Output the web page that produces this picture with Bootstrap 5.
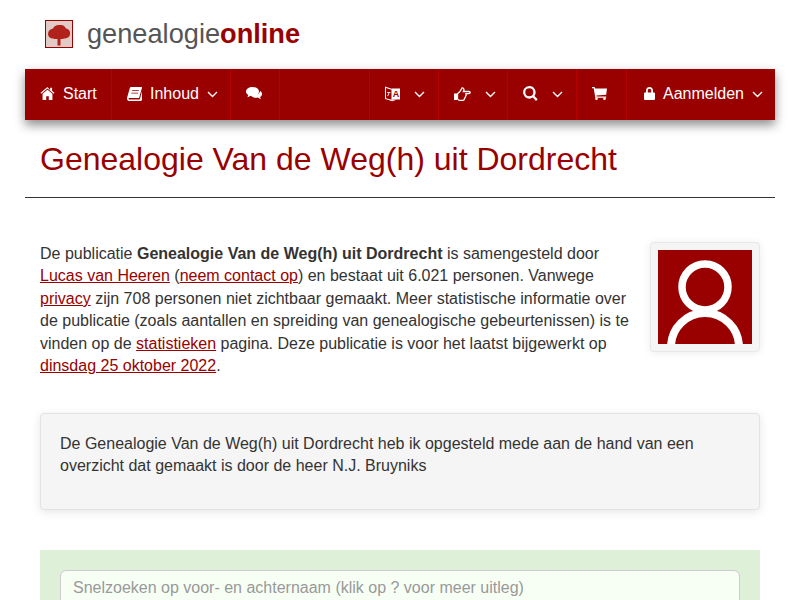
<!DOCTYPE html>
<html lang="nl">
<head>
  <meta charset="UTF-8">
  <meta name="viewport" content="width=device-width, initial-scale=1.0">
  <title>Genealogie Van de Weg(h) uit Dordrecht</title>
  <link href="https://cdn.jsdelivr.net/npm/bootstrap@5.3.2/dist/css/bootstrap.min.css" rel="stylesheet">
  <script defer src="https://cdn.jsdelivr.net/npm/bootstrap@5.3.2/dist/js/bootstrap.bundle.min.js"></script>
  <style>
    body { font-family: "Liberation Sans", Arial, sans-serif; font-size: 16px; line-height: 22.4px; color: #333; background: #fff; }
    a { color: #990000; }
    .site-wrap { width: 750px; margin: 0 auto; }
    .site-brand { height: 69px; padding: 0 0 2px 20px; gap: 14px; }
    .site-logo { width: 28px; height: 28px; display: block; }
    .site-name { font-size: 27.2px; line-height: 30px; color: #555; }
    .site-name b { color: #990000; }
    .main-bar { height: 51px; background: #990000; padding: 0; box-shadow: 0 5px 10px rgba(0,0,0,.45); }
    .main-bar .navbar-nav { flex-direction: row; width: 100%; height: 100%; }
    .main-bar .nav-link { display: flex; align-items: center; height: 51px; color: #fff; padding: 0 0 0 15px; border-left: 1px solid #b30000; gap: 8px; }
    .main-bar .nav-item:first-child .nav-link { border-left: 0; }
    .main-bar svg { fill: #fff; display: block; flex: none; margin-top: -2px; }
    .main-bar .chev { fill: none; stroke: #fff; stroke-width: 1.4; margin-top: 0; }
    .main-bar .chev-gap { margin-left: 6px; }
    .w-start { width: 86px; } .w-inhoud { width: 119px; } .w-chat { width: 49px; } .w-gap { width: 90px; }
    .w-lang { width: 69px; } .w-hand { width: 69px; } .w-search { width: 69px; } .w-cart { width: 50px; } .w-login { width: 149px; }
    .w-login .nav-link { padding-left: 17px; }
    .page-title { margin: 0; padding: 21px 15px 18px; font-size: 32px; line-height: 37px; font-weight: 400; color: #990000; border-bottom: 1px solid #333; height: 78px; }
    .intro-block { padding: 45px 15px 0; min-height: 215px; }
    .photo-box { width: 110px; height: 110px; padding: 7px; margin: -1px 0 0 20px; background: #f5f5f5; border: 1px solid #e8e8e8; border-radius: 4px; box-shadow: 0 1px 8px rgba(0,0,0,.08); }
    .photo-box svg { display: block; }
    .note-box { margin: 0 15px; height: 97px; padding: 19px; background: #f5f5f5; border: 1px solid #e3e3e3; border-radius: 4px; box-shadow: 0 2px 10px rgba(0,0,0,.1); }
    .search-box { margin: 40px 15px 0; padding: 20px; background: #dff0d8; height: 120px; }
    .search-box .form-control { height: 40px; font-size: 16px; line-height: 22.4px; padding: 3px 12px 7px; background: #f7fff5; border: 1px solid #ccc; color: #333; }
    .search-box .form-control::placeholder { color: #999; opacity: 1; }
  </style>
</head>
<body>
  <div class="site-wrap">
    <div class="site-brand d-flex align-items-center">
      <svg class="site-logo" viewBox="0 0 28 28">
        <defs><filter id="zacht"><feGaussianBlur stdDeviation="0.6"/></filter></defs>
        <rect x=".5" y=".5" width="27" height="27" fill="#e2cbc6" stroke="#990000"/>
        <g filter="url(#zacht)" fill="#b1221a">
          <path d="M12.500 18h3v7.500h-3z"/>
          <path d="M3 14c0-3 2-5 5-5.500C9 6 12 4.500 15 5c3-.5 5 1.500 6 3.500 3 .5 4.500 3 4 5.500 0 3-3 4.500-6 4.500-2 1-4 .5-5 0-2 .5-4 1-6 0-3 0-5-2-5-4.500z"/>
        </g>
      </svg>
      <div class="site-name">genealogie<b>online</b></div>
    </div>

    <nav class="navbar main-bar">
      <ul class="navbar-nav">
        <li class="nav-item w-start"><a class="nav-link" href="#">
          <svg width="15" height="13" viewBox="0 0 15 14"><path d="M7.500 0 0 6.300l.8 1L7.500 1.700l6.700 5.600.8-1-2.600-2.200V.8h-2v2.600zM7.500 3 2.200 7.400V14h3.900v-4h2.800v4h3.900V7.400z"/></svg>
          Start</a></li>
        <li class="nav-item w-inhoud"><a class="nav-link" href="#">
          <svg width="15" height="14" viewBox="0 0 15 14"><path d="M4 0h10.500c.5 0 .6.4.5.8l-2.700 9.400c-.2.6-.5.9-1.200.9H2.500c-.8 0-1 .5-.9.8.1.4.5.6 1 .6h9.700c.3 0 .5-.2.600-.4L15.300 3l-.1 9.500c-.2.900-.8 1.500-1.700 1.500H2.400C1 14-.3 12.700 0 11l2.700-9.500C3 .6 3.400 0 4 0zm1.200 3.200-.2.900h6.700l.3-.9zm-.8 2.500-.2.900h6.700l.3-.9z"/></svg>
          Inhoud
          <svg class="chev" width="11" height="7" viewBox="0 0 11 7"><path d="m1 1 4.500 4.500L10 1"/></svg></a></li>
        <li class="nav-item w-chat"><a class="nav-link" href="#">
          <svg width="16" height="13" viewBox="0 0 16 13"><path d="M6.500 0C10 0 13 2 13 4.500S10 9 6.500 9c-.7 0-1.300-.1-2-.2C3.500 9.500 2.500 10 1.200 10.200c.5-.7.900-1.400 1-2.200C.9 7.200 0 5.900 0 4.500 0 2 3 0 6.500 0zm7.700 4c1.100.7 1.800 1.700 1.800 2.900 0 1.200-.7 2.300-1.900 3 .1.800.5 1.500 1 2.100-1.200-.2-2.300-.7-3.200-1.400-.6.100-1.200.2-1.900.2-2 0-3.700-.7-4.700-1.800h.7c4.100 0 7.600-2.300 8.200-5z"/></svg></a></li>
        <li class="nav-item w-gap"><a class="nav-link" href="#" aria-label="Leeg"></a></li>
        <li class="nav-item w-lang"><a class="nav-link" href="#">
          <svg width="15" height="16" viewBox="0 0 15 16">
            <path d="M0 .5 7.500 3v12L0 13zM1 2v10.200l5.500 1.500V3.800z"/>
            <path d="M2 6h3.500v.8H4.400c-.1 1.400-.6 2.600-1.600 3.400l-.5-.6c.7-.6 1.100-1.500 1.300-2.800H2z"/>
            <path d="M7 2.500h8v11H7z"/>
            <path d="M4 14.200l3.500 1 3-.9v-.8H9z" opacity=".8"/>
            <text x="7.800" y="11" font-family="Liberation Sans, sans-serif" font-size="9" font-weight="700" fill="#990000">A</text>
          </svg>
          <svg class="chev chev-gap" width="11" height="7" viewBox="0 0 11 7"><path d="m1 1 4.500 4.500L10 1"/></svg></a></li>
        <li class="nav-item w-hand"><a class="nav-link" href="#">
          <svg width="17" height="14" viewBox="0 0 17 14">
            <path d="M0 6.500h3V13H0z"/>
            <path d="M3.500 6.500C5 6 7 3 8 1c1.200-.3 2 .6 2 2l-.6 1.500H15c1.600 0 1.600 2.200 0 2.200h-3c.5 1.200 0 2.200-.5 2.800 0 1-.5 1.500-1 2 0 1.300-.8 1.800-1.500 1.800H6c-1 0-2-.5-2.500-1.300z" fill="none" stroke="#fff" stroke-width="1.300"/>
          </svg>
          <svg class="chev chev-gap" width="11" height="7" viewBox="0 0 11 7"><path d="m1 1 4.500 4.500L10 1"/></svg></a></li>
        <li class="nav-item w-search"><a class="nav-link" href="#">
          <svg width="15" height="15" viewBox="0 0 15 15"><path d="M6.300 0a6.300 6.300 0 0 1 5.100 10l3.300 3.200-1.700 1.700-3.200-3.300A6.300 6.300 0 1 1 6.300 0zm0 2.300a4 4 0 1 0 0 8 4 4 0 0 0 0-8z"/></svg>
          <svg class="chev chev-gap" width="11" height="7" viewBox="0 0 11 7"><path d="m1 1 4.500 4.500L10 1"/></svg></a></li>
        <li class="nav-item w-cart"><a class="nav-link" href="#">
          <svg width="15" height="13" viewBox="0 0 15 13"><path d="M0 0h2.600l.5 1.400H15l-.8 6.300-9.800.9.200.9h9.600v1.300H3.300L1.700 1.300H0z"/><circle cx="4.500" cy="11.700" r="1.300"/><circle cx="12.500" cy="11.700" r="1.300"/></svg></a></li>
        <li class="nav-item w-login"><a class="nav-link" href="#">
          <svg width="11" height="13" viewBox="0 0 11 13"><path d="M5.500 0C7.700 0 9 1.600 9 3.600V5.500h1.100c.5 0 .9.400.9.900v5.700c0 .5-.4.900-.9.900H.9c-.5 0-.9-.4-.9-.9V6.400c0-.5.400-.9.900-.9H2V3.600C2 1.600 3.300 0 5.500 0zm0 1.800c-1.100 0-1.700.8-1.700 1.800v1.900h3.400V3.600c0-1-.6-1.800-1.700-1.800z"/></svg>
          Aanmelden
          <svg class="chev" width="11" height="7" viewBox="0 0 11 7"><path d="m1 1 4.500 4.500L10 1"/></svg></a></li>
      </ul>
    </nav>

    <h1 class="page-title">Genealogie Van de Weg(h) uit Dordrecht</h1>

    <div class="intro-block">
      <div class="photo-box float-end">
        <svg width="94" height="94" viewBox="0 0 94 94">
          <rect width="94" height="94" fill="#990000"/>
          <circle cx="47" cy="37" r="23" fill="none" stroke="#fff" stroke-width="7.500"/>
          <circle cx="47" cy="97" r="34" fill="none" stroke="#fff" stroke-width="8"/>
        </svg>
      </div>
      De publicatie <b>Genealogie Van de Weg(h) uit Dordrecht</b> is samengesteld door
      <a href="#">Lucas van Heeren</a> (<a href="#">neem contact op</a>) en bestaat uit 6.021 personen. Vanwege
      <a href="#">privacy</a> zijn 708 personen niet zichtbaar gemaakt. Meer statistische informatie over
      de publicatie (zoals aantallen en spreiding van genealogische gebeurtenissen) is te
      vinden op de <a href="#">statistieken</a> pagina. Deze publicatie is voor het laatst bijgewerkt op
      <a href="#">dinsdag 25 oktober 2022</a>.
    </div>

    <div class="note-box">De Genealogie Van de Weg(h) uit Dordrecht heb ik opgesteld mede aan de hand van een overzicht dat gemaakt is door de heer N.J. Bruyniks</div>

    <div class="search-box">
      <input type="text" class="form-control" placeholder="Snelzoeken op voor- en achternaam (klik op ? voor meer uitleg)">
    </div>
  </div>
</body>
</html>
